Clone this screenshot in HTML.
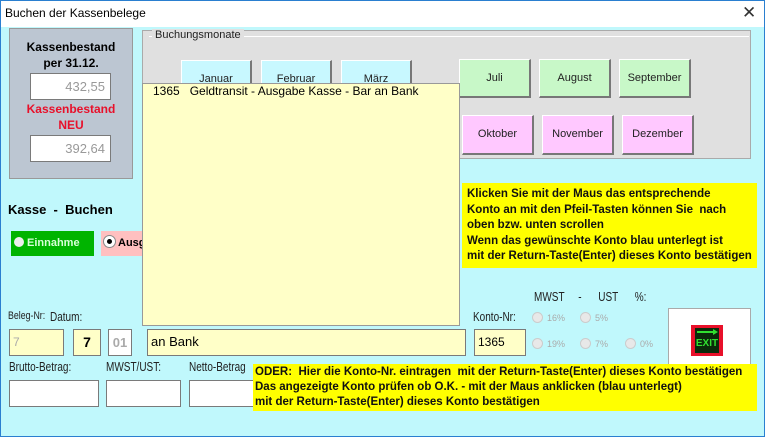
<!DOCTYPE html>
<html><head><meta charset="utf-8"><style>
*{margin:0;padding:0;box-sizing:border-box}
body{width:765px;height:437px;overflow:hidden;font-family:"Liberation Sans",sans-serif;font-size:12px;background:#c0f8fc;position:relative;color:#000}
.a{position:absolute}
.win{left:0;top:0;width:765px;height:437px;border:1px solid #2a7fd0}
.title{left:1px;top:1px;width:763px;height:26px;background:#fff}
.in{position:absolute;background:#fff;border:1px solid #7a7a7a}
.yin{position:absolute;background:#ffffc8;border:1px solid #7a7a7a}
.btn{position:absolute;border:1px solid #fff;border-right:2px solid #777;border-bottom:2px solid #777;text-align:center;font-size:11px;line-height:36px;color:#222}
.g{background:#c8f8c8}.p{background:#ffc8ff}.c{background:#c8f8ff}
.lbl{position:absolute;font-size:12.5px;color:#222;white-space:nowrap;transform:scaleX(.8);transform-origin:left}
.rad{position:absolute;font-size:9px;color:#aaa}
.rad i{display:inline-block;width:11px;height:11px;border-radius:50%;background:#e8e8e8;border:1px solid #ccc;vertical-align:-2px;margin-right:4px}
.note{position:absolute;background:#ffff00;font-weight:bold;font-size:11.5px;line-height:15.5px;color:#111}
</style></head><body>
<div class="a win"></div>
<div class="a title"></div>
<div class="a" style="left:5px;top:6px;font-size:12px">Buchen der Kassenbelege</div>
<div class="a" style="left:742px;top:3px;font-size:17px;color:#333">✕</div>

<div class="a" style="left:9px;top:28px;width:124px;height:151px;background:#bcc6d2;border:1px solid #999"></div>
<div class="a" style="left:9px;top:39px;width:124px;text-align:center;font-weight:bold;font-size:12px;line-height:16px">Kassenbestand<br>per 31.12.</div>
<div class="in" style="left:30px;top:73px;width:81px;height:27px;text-align:right;padding:5px 5px;color:#999;font-size:13px">432,55</div>
<div class="a" style="left:9px;top:101px;width:124px;text-align:center;font-weight:bold;font-size:12px;line-height:16px;color:#e8102a">Kassenbestand<br>NEU</div>
<div class="in" style="left:30px;top:135px;width:81px;height:27px;text-align:right;padding:5px 5px;color:#999;font-size:13px">392,64</div>

<div class="a" style="left:142px;top:30px;width:609px;height:129px;background:#e0e0e0;border:1px solid #aaa"></div>
<div class="a" style="left:149px;top:36px;width:600px;border-top:1px solid #fff"></div>
<div class="a" style="left:152px;top:29px;background:#e0e0e0;padding:0 3px;font-size:11px;color:#222">Buchungsmonate</div>
<div class="btn c" style="left:181px;top:60px;width:71px;height:40px">Januar</div>
<div class="btn c" style="left:261px;top:60px;width:71px;height:40px">Februar</div>
<div class="btn c" style="left:341px;top:60px;width:71px;height:40px">März</div>
<div class="btn g" style="left:459px;top:59px;width:72px;height:39px;line-height:37px">Juli</div>
<div class="btn g" style="left:539px;top:59px;width:72px;height:39px;line-height:37px">August</div>
<div class="btn g" style="left:619px;top:59px;width:72px;height:39px;line-height:37px">September</div>
<div class="btn p" style="left:462px;top:115px;width:72px;height:40px">Oktober</div>
<div class="btn p" style="left:542px;top:115px;width:72px;height:40px">November</div>
<div class="btn p" style="left:622px;top:115px;width:72px;height:40px">Dezember</div>

<div class="a" style="left:142px;top:83px;width:318px;height:243px;background:#ffffc8;border:1px solid #999"></div>
<div class="a" style="left:153px;top:84px;font-size:12px;white-space:pre">1365   Geldtransit - Ausgabe Kasse - Bar an Bank</div>

<div class="note" style="left:462px;top:183px;width:295px;height:85px;padding:4px 5px">Klicken Sie mit der Maus das entsprechende<br>Konto an mit den Pfeil-Tasten können Sie&nbsp; nach<br>oben bzw. unten scrollen<br>Wenn das gewünschte Konto blau unterlegt ist<br>mit der Return-Taste(Enter) dieses Konto bestätigen</div>

<div class="a" style="left:8px;top:202px;font-weight:bold;font-size:13px;white-space:pre">Kasse  -  Buchen</div>
<div class="a" style="left:11px;top:231px;width:83px;height:25px;background:#00b400;color:#d8ffd8;font-weight:bold;font-size:11px;line-height:25px;padding-left:3px"><span style="display:inline-block;width:10px;height:10px;border-radius:50%;background:#eee;vertical-align:-1px;margin-right:3px"></span>Einnahme</div>
<div class="a" style="left:101px;top:231px;width:41px;height:25px;background:#ffc0c0;font-weight:bold;font-size:11px;line-height:25px;padding-left:3px;overflow:hidden;white-space:nowrap"><span style="display:inline-block;width:11px;height:11px;border-radius:50%;background:#000;border:3px solid #fff;box-shadow:0 0 0 1px #888;vertical-align:-1px;margin-right:3px"></span>Ausgabe</div>

<div class="lbl" style="left:8px;top:310px;font-size:11px">Beleg-Nr:</div>
<div class="lbl" style="left:50px;top:310px">Datum:</div>
<div class="yin" style="left:9px;top:329px;width:55px;height:27px;color:#aaa;padding:5px 3px">7</div>
<div class="yin" style="left:73px;top:329px;width:28px;height:27px;font-weight:bold;font-size:14px;text-align:center;padding-top:4px">7</div>
<div class="in" style="left:108px;top:329px;width:24px;height:27px;color:#aaa;font-weight:bold;text-align:center;padding-top:5px;font-size:13px">01</div>
<div class="yin" style="left:147px;top:329px;width:319px;height:27px;padding:4px 3px;font-size:13px">an Bank</div>
<div class="lbl" style="left:473px;top:310px">Konto-Nr:</div>
<div class="yin" style="left:474px;top:329px;width:52px;height:27px;padding:5px 3px">1365</div>
<div class="lbl" style="left:534px;top:290px;white-space:pre">MWST     -      UST      %:</div>
<div class="rad" style="left:532px;top:312px"><i></i>16%</div>
<div class="rad" style="left:580px;top:312px"><i></i>5%</div>
<div class="rad" style="left:532px;top:338px"><i></i>19%</div>
<div class="rad" style="left:580px;top:338px"><i></i>7%</div>
<div class="rad" style="left:625px;top:338px"><i></i>0%</div>
<div class="a" style="left:668px;top:308px;width:83px;height:58px;background:#fff;border:1px solid #aaa"></div>
<div class="a" style="left:691px;top:325px;width:32px;height:31px;background:#e8102a"></div>
<div class="a" style="left:695px;top:328px;width:24px;height:25px;background:#0a2a0a;color:#30e030;font-weight:bold;font-size:10px;text-align:center;line-height:32px">EXIT</div>
<div class="a" style="left:697px;top:331px;width:19px;height:2px;background:#30e030"></div>
<div class="a" style="left:713px;top:329px;width:0;height:0;border-left:5px solid #30e030;border-top:3px solid transparent;border-bottom:3px solid transparent"></div>

<div class="lbl" style="left:9px;top:360px">Brutto-Betrag:</div>
<div class="lbl" style="left:106px;top:360px">MWST/UST:</div>
<div class="lbl" style="left:189px;top:360px">Netto-Betrag</div>
<div class="in" style="left:9px;top:380px;width:90px;height:27px"></div>
<div class="in" style="left:106px;top:380px;width:75px;height:27px"></div>
<div class="in" style="left:189px;top:380px;width:70px;height:27px"></div>
<div class="note" style="left:253px;top:364px;width:504px;height:47px;padding:1px 2px;line-height:15px">ODER:&nbsp; Hier die Konto-Nr. eintragen&nbsp; mit der Return-Taste(Enter) dieses Konto bestätigen<br>Das angezeigte Konto prüfen ob O.K. - mit der Maus anklicken (blau unterlegt)<br>mit der Return-Taste(Enter) dieses Konto bestätigen</div>
</body></html>
